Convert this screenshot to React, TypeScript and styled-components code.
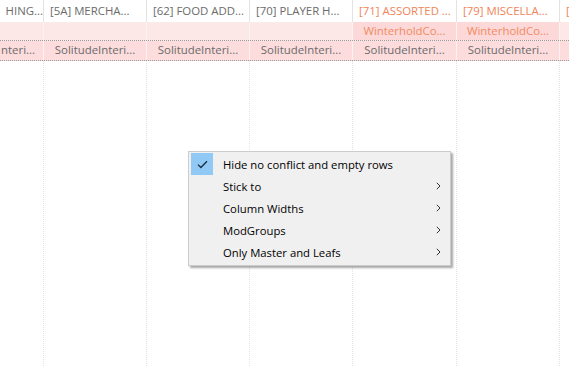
import React, { FunctionComponent } from 'react';
import styled, { createGlobalStyle } from 'styled-components';

const GlobalStyle = createGlobalStyle`
    html, body {
        margin: 0;
        padding: 0;
        background: #FFF;
    }
    body {
        font-family: "Open Sans", "Noto Sans", sans-serif;
    }
`;

const COLS = [44, 103, 103, 103, 104, 103, 103, 10];

const Page = styled.div`
    position: relative;
    width: 569px;
    height: 366px;
    overflow: hidden;
    display: flex;
    flex-direction: column;
`;

const Row = styled.div<{ $height: number; $bg: string; $dotted?: boolean }>`
    display: flex;
    height: ${(p) => p.$height}px;
    background-color: ${(p) => p.$bg};
    border-bottom: ${(p) => (p.$dotted ? '1px dotted #9a9a9a' : 'none')};
    flex-shrink: 0;
`;

const HeaderCell = styled.div<{ $width: number; $orange?: boolean; $clip?: boolean; $last?: boolean }>`
    width: ${(p) => p.$width}px;
    flex-shrink: 0;
    box-sizing: border-box;
    border-right: ${(p) => (p.$last ? 'none' : '1px solid #e3e3e3')};
    padding-left: ${(p) => (p.$clip ? 0 : p.$last ? 5 : 6)}px;
    font-size: 11.4px;
    line-height: 22px;
    color: ${(p) => (p.$orange ? '#f0845a' : '#6b6b6b')};
    white-space: nowrap;
    overflow: hidden;
    text-align: ${(p) => (p.$clip ? 'right' : 'left')};
`;

const DataCell = styled.div<{ $width: number; $bg?: string; $orange?: boolean; $clip?: boolean }>`
    width: ${(p) => p.$width}px;
    flex-shrink: 0;
    box-sizing: border-box;
    border-right: 1px solid #fbf2f2;
    background-color: ${(p) => p.$bg || 'transparent'};
    font-size: 11.4px;
    line-height: 18px;
    color: ${(p) => (p.$orange ? '#f28a62' : '#6b6b6b')};
    white-space: nowrap;
    overflow: hidden;
    text-align: ${(p) => (p.$clip ? 'right' : 'center')};
    padding-right: ${(p) => (p.$clip ? 8 : 0)}px;
`;

const Body = styled.div`
    flex: 1;
    display: flex;
`;

const BodyCol = styled.div<{ $width: number }>`
    width: ${(p) => p.$width}px;
    flex-shrink: 0;
    box-sizing: border-box;
    border-right: 1px dotted #e2e2e2;
`;

const Menu = styled.div`
    position: absolute;
    left: 188px;
    top: 151px;
    width: 263px;
    box-sizing: border-box;
    background-color: #f0f0f0;
    border: 1px solid #cccccc;
    box-shadow: 2px 2px 2px rgba(0, 0, 0, 0.35);
    padding: 1px 2px 2px 2px;
    font-family: "Open Sans", "Noto Sans", sans-serif;
`;

const MenuItem = styled.div`
    display: flex;
    align-items: center;
    height: 22px;
    font-size: 11.3px;
    color: #000;
`;

const CheckBox = styled.div<{ $on?: boolean }>`
    width: 22px;
    height: 22px;
    margin-right: 10px;
    background-color: ${(p) => (p.$on ? '#90c8f6' : 'transparent')};
    display: flex;
    align-items: center;
    justify-content: center;
`;

const Label = styled.span`
    flex: 1;
`;

const Arrow = styled.span`
    width: 12px;
    display: flex;
    justify-content: flex-start;
`;

const header = [
    { t: 'HING...', clip: true },
    { t: '[5A] MERCHA...' },
    { t: '[62] FOOD ADD...' },
    { t: '[70] PLAYER H...' },
    { t: '[71] ASSORTED ...', orange: true },
    { t: '[79] MISCELLA...', orange: true },
    { t: '[7A] ...', orange: true },
];

const Chevron = () => (
    <svg width="5" height="8" viewBox="0 0 5 8">
        <path d="M0.8 0.8 L4 4 L0.8 7.2" fill="none" stroke="#333" strokeWidth="1" />
    </svg>
);

const Check = () => (
    <svg width="11" height="9" viewBox="0 0 11 9">
        <path d="M1 4.6 L3.9 7.5 L10 1.2" fill="none" stroke="#1c2c3c" strokeWidth="1.3" />
    </svg>
);

const menuItems = [
    { label: 'Hide no conflict and empty rows', checked: true, sub: false },
    { label: 'Stick to', sub: true },
    { label: 'Column Widths', sub: true },
    { label: 'ModGroups', sub: true },
    { label: 'Only Master and Leafs', sub: true },
];

const App: FunctionComponent = () => {
    return (
        <>
            <GlobalStyle />
            <Page>
                <Row $height={22} $bg="#FFF">
                    {COLS.map((w, i) => {
                        const h = header[i];
                        return (
                            <HeaderCell
                                key={i}
                                $width={w}
                                $orange={h ? h.orange : true}
                                $clip={h ? h.clip : false}
                                $last={!h}
                            >
                                {h ? h.t : '['}
                            </HeaderCell>
                        );
                    })}
                </Row>
                <Row $height={18} $bg="#fde8e8" $dotted>
                    {COLS.map((w, i) => {
                        const hit = i === 4 || i === 5;
                        return (
                            <DataCell key={i} $width={w} $bg={hit ? '#fcd8d8' : undefined} $orange={hit}>
                                {hit ? 'WinterholdCo...' : ''}
                            </DataCell>
                        );
                    })}
                </Row>
                <Row $height={19} $bg="#fcdcdc" $dotted>
                    {COLS.map((w, i) => (
                        <DataCell key={i} $width={w} $clip={i === 0}>
                            {i === 0 ? 'nteri...' : i < 7 ? 'SolitudeInteri...' : ''}
                        </DataCell>
                    ))}
                </Row>
                <Body>
                    {COLS.map((w, i) => (
                        <BodyCol key={i} $width={w} />
                    ))}
                </Body>
                <Menu>
                    {menuItems.map((m) => (
                        <MenuItem key={m.label}>
                            <CheckBox $on={m.checked}>{m.checked && <Check />}</CheckBox>
                            <Label>{m.label}</Label>
                            <Arrow>{m.sub && <Chevron />}</Arrow>
                        </MenuItem>
                    ))}
                </Menu>
            </Page>
        </>
    );
};

export default App;
